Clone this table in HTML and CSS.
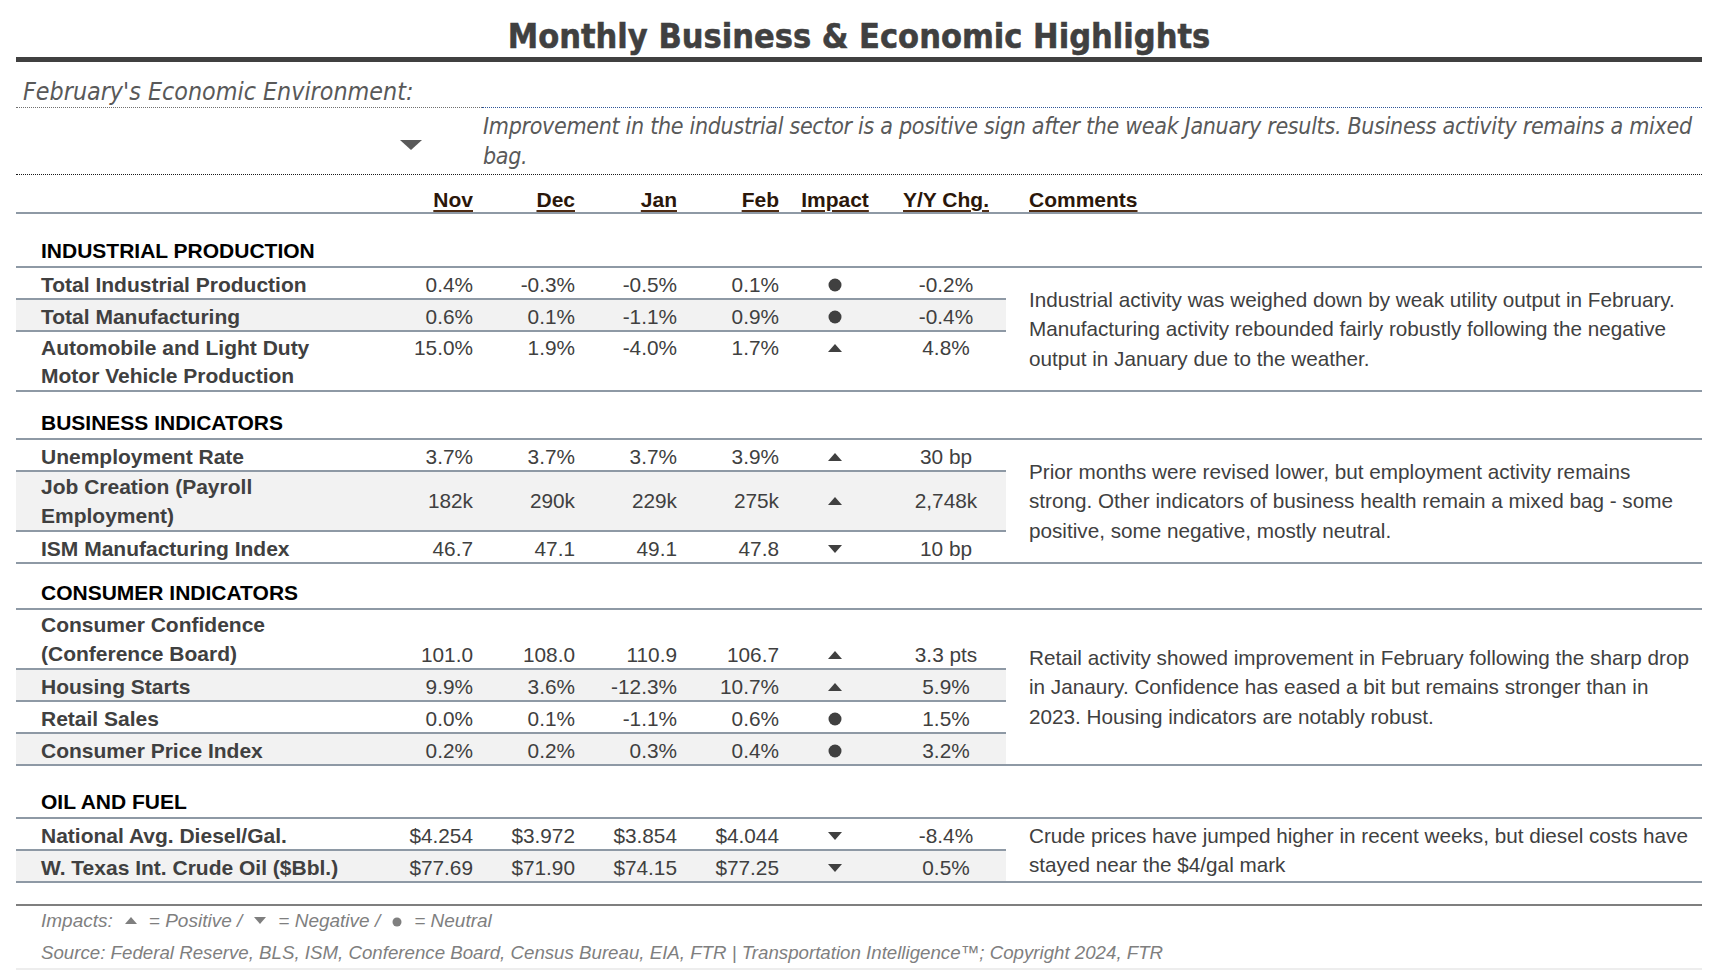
FILE: index.html
```html
<!DOCTYPE html>
<html lang="en">
<head>
<meta charset="utf-8">
<title>Monthly Business &amp; Economic Highlights</title>
<link rel="stylesheet" href="styles.css">
</head>
<body>
<div class="page">
  <h1 class="title">Monthly Business &amp; Economic Highlights</h1>

  <section class="env">
    <div class="env-label">February's Economic Environment:</div>
    <div class="env-rule"></div>
    <div class="env-mark">
      <svg class="env-tri" width="22" height="10" viewBox="0 0 22 10"><polygon points="0,0 22,0 11,10"/></svg>
    </div>
    <div class="env-text">Improvement in the industrial sector is a positive sign after the weak January results. Business activity remains a mixed bag.</div>
  </section>

  <div class="thead">
    <div></div>
    <div class="h num"><span>Nov</span></div>
    <div class="h num"><span>Dec</span></div>
    <div class="h num"><span>Jan</span></div>
    <div class="h num"><span>Feb</span></div>
    <div class="h ctr"><span>Impact</span></div>
    <div class="h ctr"><span>Y/Y Chg.</span></div>
    <div class="h com"><span>Comments</span></div>
  </div>

  <section class="group">
    <div class="group-head head-ind">INDUSTRIAL PRODUCTION</div>
    <div class="group-body">
      <div class="rows">
        <div class="row">
          <div class="label">Total Industrial Production</div>
          <div class="num">0.4%</div><div class="num">-0.3%</div><div class="num">-0.5%</div><div class="num">0.1%</div>
          <div class="imp"><svg class="dot" width="14" height="14" viewBox="0 0 14 14"><circle cx="7" cy="7" r="6.5"/></svg></div>
          <div class="yy">-0.2%</div>
        </div>
        <div class="row alt">
          <div class="label">Total Manufacturing</div>
          <div class="num">0.6%</div><div class="num">0.1%</div><div class="num">-1.1%</div><div class="num">0.9%</div>
          <div class="imp"><svg class="dot" width="14" height="14" viewBox="0 0 14 14"><circle cx="7" cy="7" r="6.5"/></svg></div>
          <div class="yy">-0.4%</div>
        </div>
        <div class="row tall top">
          <div class="label">Automobile and Light Duty Motor Vehicle Production</div>
          <div class="num">15.0%</div><div class="num">1.9%</div><div class="num">-4.0%</div><div class="num">1.7%</div>
          <div class="imp"><svg class="tri" width="14" height="8" viewBox="0 0 14 8"><polygon points="0,8 14,8 7,0"/></svg></div>
          <div class="yy">4.8%</div>
        </div>
      </div>
      <div class="comment">Industrial activity was weighed down by weak utility output in February. Manufacturing activity rebounded fairly robustly following the negative output in January due to the weather.</div>
    </div>
  </section>

  <section class="group">
    <div class="group-head head-bus">BUSINESS INDICATORS</div>
    <div class="group-body">
      <div class="rows">
        <div class="row">
          <div class="label">Unemployment Rate</div>
          <div class="num">3.7%</div><div class="num">3.7%</div><div class="num">3.7%</div><div class="num">3.9%</div>
          <div class="imp"><svg class="tri" width="14" height="8" viewBox="0 0 14 8"><polygon points="0,8 14,8 7,0"/></svg></div>
          <div class="yy">30 bp</div>
        </div>
        <div class="row alt tall mid">
          <div class="label">Job Creation (Payroll Employment)</div>
          <div class="num">182k</div><div class="num">290k</div><div class="num">229k</div><div class="num">275k</div>
          <div class="imp"><svg class="tri" width="14" height="8" viewBox="0 0 14 8"><polygon points="0,8 14,8 7,0"/></svg></div>
          <div class="yy">2,748k</div>
        </div>
        <div class="row">
          <div class="label">ISM Manufacturing Index</div>
          <div class="num">46.7</div><div class="num">47.1</div><div class="num">49.1</div><div class="num">47.8</div>
          <div class="imp"><svg class="tri" width="14" height="8" viewBox="0 0 14 8"><polygon points="0,0 14,0 7,8"/></svg></div>
          <div class="yy">10 bp</div>
        </div>
      </div>
      <div class="comment">Prior months were revised lower, but employment activity remains strong. Other indicators of business health remain a mixed bag - some positive, some negative, mostly neutral.</div>
    </div>
  </section>

  <section class="group">
    <div class="group-head head-con">CONSUMER INDICATORS</div>
    <div class="group-body">
      <div class="rows">
        <div class="row tall bot">
          <div class="label">Consumer Confidence (Conference Board)</div>
          <div class="num">101.0</div><div class="num">108.0</div><div class="num">110.9</div><div class="num">106.7</div>
          <div class="imp"><svg class="tri" width="14" height="8" viewBox="0 0 14 8"><polygon points="0,8 14,8 7,0"/></svg></div>
          <div class="yy">3.3 pts</div>
        </div>
        <div class="row alt">
          <div class="label">Housing Starts</div>
          <div class="num">9.9%</div><div class="num">3.6%</div><div class="num">-12.3%</div><div class="num">10.7%</div>
          <div class="imp"><svg class="tri" width="14" height="8" viewBox="0 0 14 8"><polygon points="0,8 14,8 7,0"/></svg></div>
          <div class="yy">5.9%</div>
        </div>
        <div class="row">
          <div class="label">Retail Sales</div>
          <div class="num">0.0%</div><div class="num">0.1%</div><div class="num">-1.1%</div><div class="num">0.6%</div>
          <div class="imp"><svg class="dot" width="14" height="14" viewBox="0 0 14 14"><circle cx="7" cy="7" r="6.5"/></svg></div>
          <div class="yy">1.5%</div>
        </div>
        <div class="row alt">
          <div class="label">Consumer Price Index</div>
          <div class="num">0.2%</div><div class="num">0.2%</div><div class="num">0.3%</div><div class="num">0.4%</div>
          <div class="imp"><svg class="dot" width="14" height="14" viewBox="0 0 14 14"><circle cx="7" cy="7" r="6.5"/></svg></div>
          <div class="yy">3.2%</div>
        </div>
      </div>
      <div class="comment">Retail activity showed improvement in February following the sharp drop in Janaury. Confidence has eased a bit but remains stronger than in 2023. Housing indicators are notably robust.</div>
    </div>
  </section>

  <section class="group">
    <div class="group-head head-oil">OIL AND FUEL</div>
    <div class="group-body">
      <div class="rows">
        <div class="row">
          <div class="label">National Avg. Diesel/Gal.</div>
          <div class="num">$4.254</div><div class="num">$3.972</div><div class="num">$3.854</div><div class="num">$4.044</div>
          <div class="imp"><svg class="tri" width="14" height="8" viewBox="0 0 14 8"><polygon points="0,0 14,0 7,8"/></svg></div>
          <div class="yy">-8.4%</div>
        </div>
        <div class="row alt">
          <div class="label">W. Texas Int. Crude Oil ($Bbl.)</div>
          <div class="num">$77.69</div><div class="num">$71.90</div><div class="num">$74.15</div><div class="num">$77.25</div>
          <div class="imp"><svg class="tri" width="14" height="8" viewBox="0 0 14 8"><polygon points="0,0 14,0 7,8"/></svg></div>
          <div class="yy">0.5%</div>
        </div>
      </div>
      <div class="comment">Crude prices have jumped higher in recent weeks, but diesel costs have stayed near the $4/gal mark</div>
    </div>
  </section>

  <footer class="foot">
    <div class="legend">Impacts:<svg class="lg" width="12" height="7" viewBox="0 0 12 7"><polygon points="0,7 12,7 6,0"/></svg>= Positive /<svg class="lg lg-down" width="12" height="7" viewBox="0 0 12 7"><polygon points="0,0 12,0 6,7"/></svg>= Negative /<svg class="lg lg-dot" width="10" height="10" viewBox="0 0 10 10"><circle cx="5" cy="5" r="4.5"/></svg>= Neutral</div>
    <div class="source">Source: Federal Reserve, BLS, ISM, Conference Board, Census Bureau, EIA, FTR | Transportation Intelligence™; Copyright 2024, FTR</div>
  </footer>
</div>
</body>
</html>
```

FILE: styles.css
```css
* { box-sizing: border-box; }

html, body {
  margin: 0;
  background: #ffffff;
}

body {
  font-family: "Liberation Sans", Arial, sans-serif;
  color: #404040;
}

.page {
  padding: 0 16px;
}

/* Title */
.title {
  margin: 0;
  height: 62px;
  padding-top: 16px;
  line-height: 41px;
  text-align: center;
  font-family: "DejaVu Sans Condensed", "DejaVu Sans", sans-serif;
  font-stretch: condensed;
  font-weight: bold;
  font-size: 34px;
  color: #404040;
  -webkit-text-stroke: 0.5px #404040;
  border-bottom: 5px solid #404040;
}

/* Environment block */
.env {
  display: grid;
  grid-template-columns: 466px 1fr;
  grid-template-rows: 46px 66px;
  border-bottom: 1px dotted #1a1a1a;
  font-family: "DejaVu Sans Condensed", "DejaVu Sans", sans-serif;
  font-stretch: condensed;
  font-style: italic;
  color: #595959;
}

.env-label {
  display: flex;
  align-items: flex-end;
  padding: 0 0 1px 7px;
  font-size: 24.8px;
  line-height: 28px;
  white-space: nowrap;
  border-bottom: 1px dotted #6f6f6f;
}

.env-rule {
  border-bottom: 1px dotted #2f5597;
}

.env-mark {
  display: flex;
  align-items: center;
  justify-content: flex-end;
  padding: 7px 60px 0 0;
}

.env-tri { fill: #595959; display: block; }

.env-text {
  display: flex;
  align-items: center;
  padding: 0 0 0 1px;
  font-size: 23px;
  letter-spacing: -0.3px;
  line-height: 30px;
}

/* Column header row */
.thead {
  display: grid;
  grid-template-columns: 360px repeat(5, 102px) 120px 1fr;
  align-items: end;
  height: 39px;
  border-bottom: 2px solid #8e99a5;
  font-weight: bold;
  font-size: 21px;
  line-height: 24px;
  color: #2b170a;
}

.h span {
  text-decoration: underline;
  text-decoration-color: #4f2c14;
  text-decoration-thickness: 2px;
  text-underline-offset: 3px;
}

.thead .num { text-align: right; padding-right: 5px; }
.thead .ctr { text-align: center; }
.thead .com { padding-left: 23px; }

/* Groups */
.group-head {
  display: flex;
  align-items: flex-end;
  padding: 0 0 3px 25px;
  font-weight: bold;
  font-size: 21px;
  line-height: 24px;
  color: #000000;
  border-bottom: 2px solid #8e99a5;
}

.head-ind { height: 54px; }
.head-bus { height: 48px; }
.head-con { height: 46px; }
.head-oil { height: 53px; }

.group-body {
  display: grid;
  grid-template-columns: 990px 1fr;
  border-bottom: 2px solid #8e99a5;
}

.row {
  display: grid;
  grid-template-columns: 360px repeat(5, 102px) 120px;
  grid-template-rows: 100%;
  align-items: end;
  height: 32px;
  border-bottom: 2px solid #8e99a5;
  font-size: 20.8px;
  line-height: 26px;
  color: #404040;
}

.row:last-child {
  height: 30px;
  border-bottom: none;
}

.row.tall { height: 60px; }
.row.tall:last-child { height: 58px; }

.row.alt { background: #f2f2f2; }

.row.top { align-items: start; }
.row.mid { align-items: center; }
.row.bot { align-items: end; }

.row.top > div { padding-top: 2px; line-height: 28px; }

.label {
  padding: 0 25px;
  font-weight: bold;
  font-size: 21px;
  color: #404040;
}

.row.tall .label {
  align-self: start;
  line-height: 29px;
}

.row.top .label {
  padding-top: 2px;
  line-height: 28px;
}

.num {
  text-align: right;
  padding-right: 5px;
}

.yy { text-align: center; }

.imp {
  display: flex;
  justify-content: center;
  align-items: center;
  height: 26px;
}

.row.top .imp { height: 30px; }

.dot { fill: #404040; display: block; }
.tri { fill: #404040; display: block; }

.comment {
  display: flex;
  align-items: center;
  padding: 0 5px 0 23px;
  font-size: 20.7px;
  line-height: 29.5px;
  color: #404040;
}

/* Footer */
.foot {
  margin-top: 21px;
  border-top: 2px solid #7f7f7f;
  font-style: italic;
  font-size: 19px;
  color: #7f7f7f;
}

.legend {
  padding-left: 25px;
  line-height: 30px;
}

.lg {
  fill: #7f7f7f;
  margin: 0 12px 0 12px;
  vertical-align: 3px;
}

.lg-dot { vertical-align: 0; }

.source {
  margin-top: 2px;
  padding-left: 25px;
  font-size: 18.7px;
  line-height: 30px;
  border-bottom: 2px solid #ededed;
}
```
